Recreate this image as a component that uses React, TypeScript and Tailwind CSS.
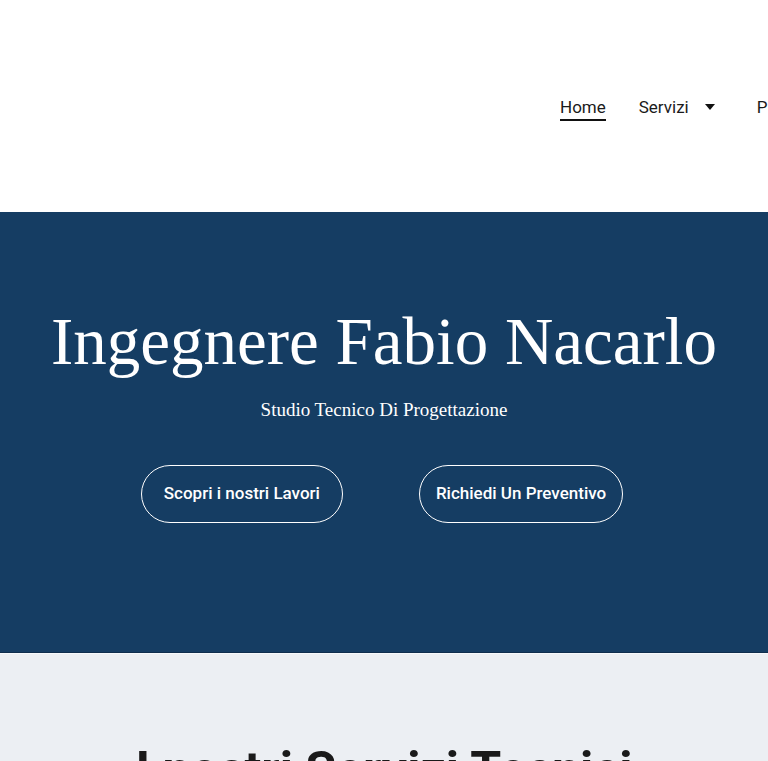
import { useState } from "react";

const navItems = ["Home", "Servizi", "Progetti", "Chi Siamo", "Contatti"];

export default function App() {
  const [active] = useState("Home");

  return (
    <div className="w-full overflow-x-hidden font-['Roboto',sans-serif]">
      {/* Header */}
      <header className="h-[212px] bg-white flex items-center overflow-hidden">
        <nav className="flex items-center whitespace-nowrap pl-[560px] mt-[1px] text-[17px] text-[#1a1a1a]">
          {navItems.map((item) => (
            <div key={item} className="flex items-center mr-[33px] last:mr-0">
              <a
                href="#"
                className={
                  item === active
                    ? "border-b-2 border-[#111] pt-[2px] leading-6"
                    : "pt-[2px] leading-6 border-b-2 border-transparent"
                }
              >
                {item}
              </a>
              {item === "Servizi" && (
                <svg width="10" height="8" viewBox="0 0 10 8" className="ml-[16px] mr-[9px]">
                  <path d="M0 1h10L5 7z" fill="#111" />
                </svg>
              )}
            </div>
          ))}
        </nav>
      </header>

      {/* Hero */}
      <section className="bg-[#153d63] border-b border-[#0f2e4d] pt-[96px] pb-[129px] flex flex-col items-center text-white">
        <h1 className="font-['Liberation_Serif',serif] text-[67px] leading-[67px] font-normal">
          Ingegnere Fabio Nacarlo
        </h1>
        <p className="font-['Liberation_Serif',serif] text-[19px] leading-7 mt-[21px]">
          Studio Tecnico Di Progettazione
        </p>
        <div className="flex gap-[76px] mt-[41px] mr-[4px]">
          <a
            href="#"
            className="h-[58px] px-[22px] flex items-center rounded-full border border-white text-[17px] font-medium"
          >
            Scopri i nostri Lavori
          </a>
          <a
            href="#"
            className="h-[58px] px-[16px] flex items-center rounded-full border border-white text-[17px] font-medium"
          >
            Richiedi Un Preventivo
          </a>
        </div>
      </section>

      {/* Services */}
      <section className="bg-[#eceff3] border-t border-[#f7f9fb] pt-[91px] pb-24 flex flex-col items-center">
        <h2 className="text-[50px] leading-[50px] font-bold text-[#1a1a1a]">I nostri Servizi Tecnici</h2>
        <div className="h-[300px]" />
      </section>
    </div>
  );
}
